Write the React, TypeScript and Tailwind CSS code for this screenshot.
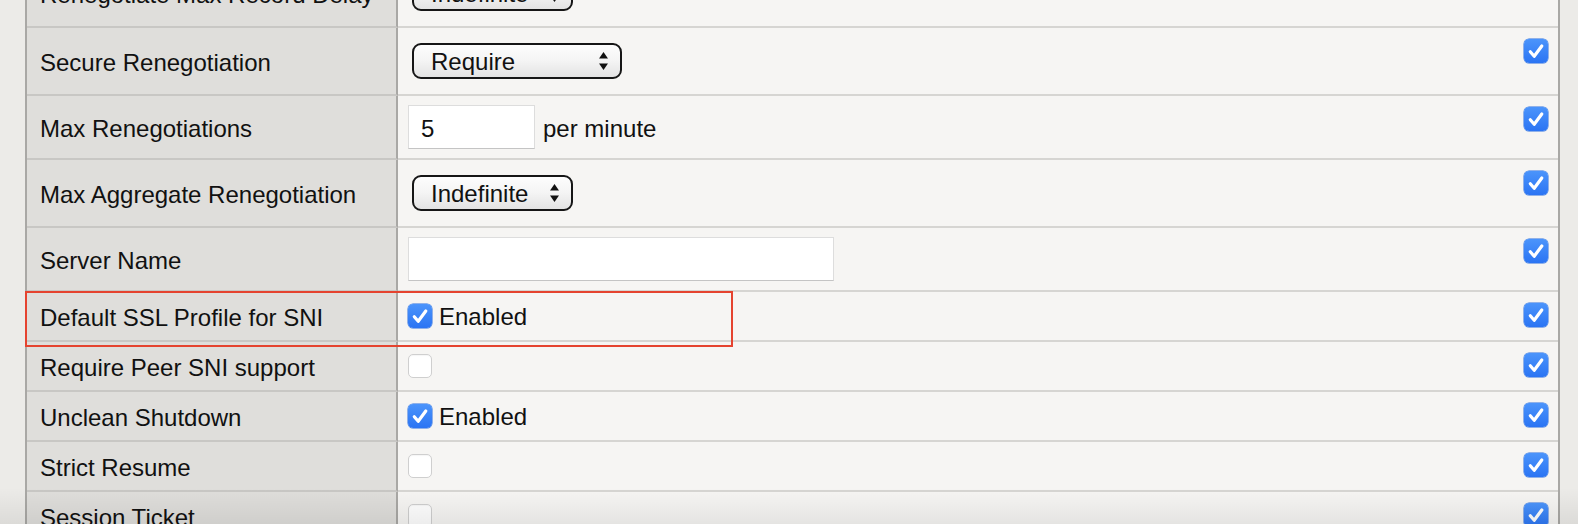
import React from 'react'

type Row = {
  label: string
  height: string
  value: React.ReactNode
}

const Check = ({ checked }: { checked: boolean }) =>
  checked ? (
    <span className="flex h-[24px] w-[24px] shrink-0 items-center justify-center rounded-[5px] bg-gradient-to-b from-[#4b94fb] to-[#2b74f3] shadow-[0_0_0_0.5px_#2a6fe0]">
      <svg width="24" height="24" viewBox="0 0 24 24" fill="none">
        <path d="M6.3 12.8 L10.2 17.2 L17.8 7" stroke="white" strokeWidth="3.2" strokeLinecap="round" strokeLinejoin="round" />
      </svg>
    </span>
  ) : (
    <span className="block h-[24px] w-[24px] shrink-0 rounded-[5px] border border-[#cfcfcf] bg-white shadow-[inset_0_1px_1px_rgba(0,0,0,0.04)]" />
  )

const Select = ({ text, width }: { text: string; width: string }) => (
  <div
    className={`ml-[4px] flex h-[36px] ${width} items-center justify-between rounded-[9px] border-2 border-[#161616] bg-gradient-to-b from-[#fdfdfd] via-[#f4f4f4] to-[#e3e3e3] pl-[17px] pr-[11px] leading-none`}
  >
    <span className="pt-[2px]">{text}</span>
    <svg width="11" height="22" viewBox="0 0 11 22">
      <polygon points="5.5,2 10,8.5 1,8.5" fill="#111" />
      <polygon points="1,13.5 10,13.5 5.5,20" fill="#111" />
    </svg>
  </div>
)

const TextBox = ({ value, width }: { value?: string; width: string }) => (
  <div
    className={`flex h-[44px] ${width} items-center border border-[#dddddd] border-b-[#c4c4c4] bg-white pl-[12px] pt-[3px] leading-none`}
  >
    {value}
  </div>
)

const Enabled = () => (
  <div className="flex items-center gap-[7px]">
    <Check checked />
    <span className="pt-[1px] leading-none">Enabled</span>
  </div>
)

const rows: Row[] = [
  { label: 'Renegotiate Max Record Delay', height: 'h-[68px]', value: <Select text="Indefinite" width="w-[161px]" /> },
  { label: 'Secure Renegotiation', height: 'h-[68px]', value: <Select text="Require" width="w-[210px]" /> },
  {
    label: 'Max Renegotiations',
    height: 'h-[64px]',
    value: (
      <div className="flex items-center gap-[8px]">
        <TextBox value="5" width="w-[127px]" />
        <span className="pt-[3px] leading-none">per minute</span>
      </div>
    ),
  },
  { label: 'Max Aggregate Renegotiation', height: 'h-[68px]', value: <Select text="Indefinite" width="w-[161px]" /> },
  { label: 'Server Name', height: 'h-[64px]', value: <TextBox width="w-[426px]" /> },
  { label: 'Default SSL Profile for SNI', height: 'h-[50px]', value: <Enabled /> },
  { label: 'Require Peer SNI support', height: 'h-[50px]', value: <Check checked={false} /> },
  { label: 'Unclean Shutdown', height: 'h-[50px]', value: <Enabled /> },
  { label: 'Strict Resume', height: 'h-[50px]', value: <Check checked={false} /> },
  { label: 'Session Ticket', height: 'h-[50px]', value: <Check checked={false} /> },
]

export default function App() {
  return (
    <div className="relative h-[524px] w-[1578px] overflow-hidden bg-[#ecebe8] font-['Liberation_Sans',Arial,sans-serif] text-[24px] text-[#111]">
      <div className="-mt-[40px] ml-[25px] mr-[18px] border-x-2 border-[#a9a8a5]">
        {rows.map((row) => (
          <div key={row.label} className={`flex ${row.height}`}>
            {/* label column */}
            <div className="flex w-[371px] items-center border-b-2 border-r-2 border-b-[#c8c7c4] border-r-[#a9a8a5] bg-[#dfdedb] pl-[13px] pt-[3px] leading-none">
              {row.label}
            </div>
            {/* value column */}
            <div className="flex flex-1 border-b-2 border-[#d6d5d2] bg-[#f6f5f3]">
              <div className="flex flex-1 items-center pl-[10px]">{row.value}</div>
              <div className="pr-[10px] pt-[11px]">
                <Check checked />
              </div>
            </div>
          </div>
        ))}
      </div>

      {/* highlight annotation */}
      <div className="pointer-events-none absolute left-[25px] top-[291px] h-[56px] w-[708px] border-2 border-[#e5432f]" />

      {/* window bottom shading */}
      <div className="pointer-events-none absolute bottom-0 left-0 h-[36px] w-full bg-gradient-to-b from-transparent to-black/[0.07]" />
    </div>
  )
}
